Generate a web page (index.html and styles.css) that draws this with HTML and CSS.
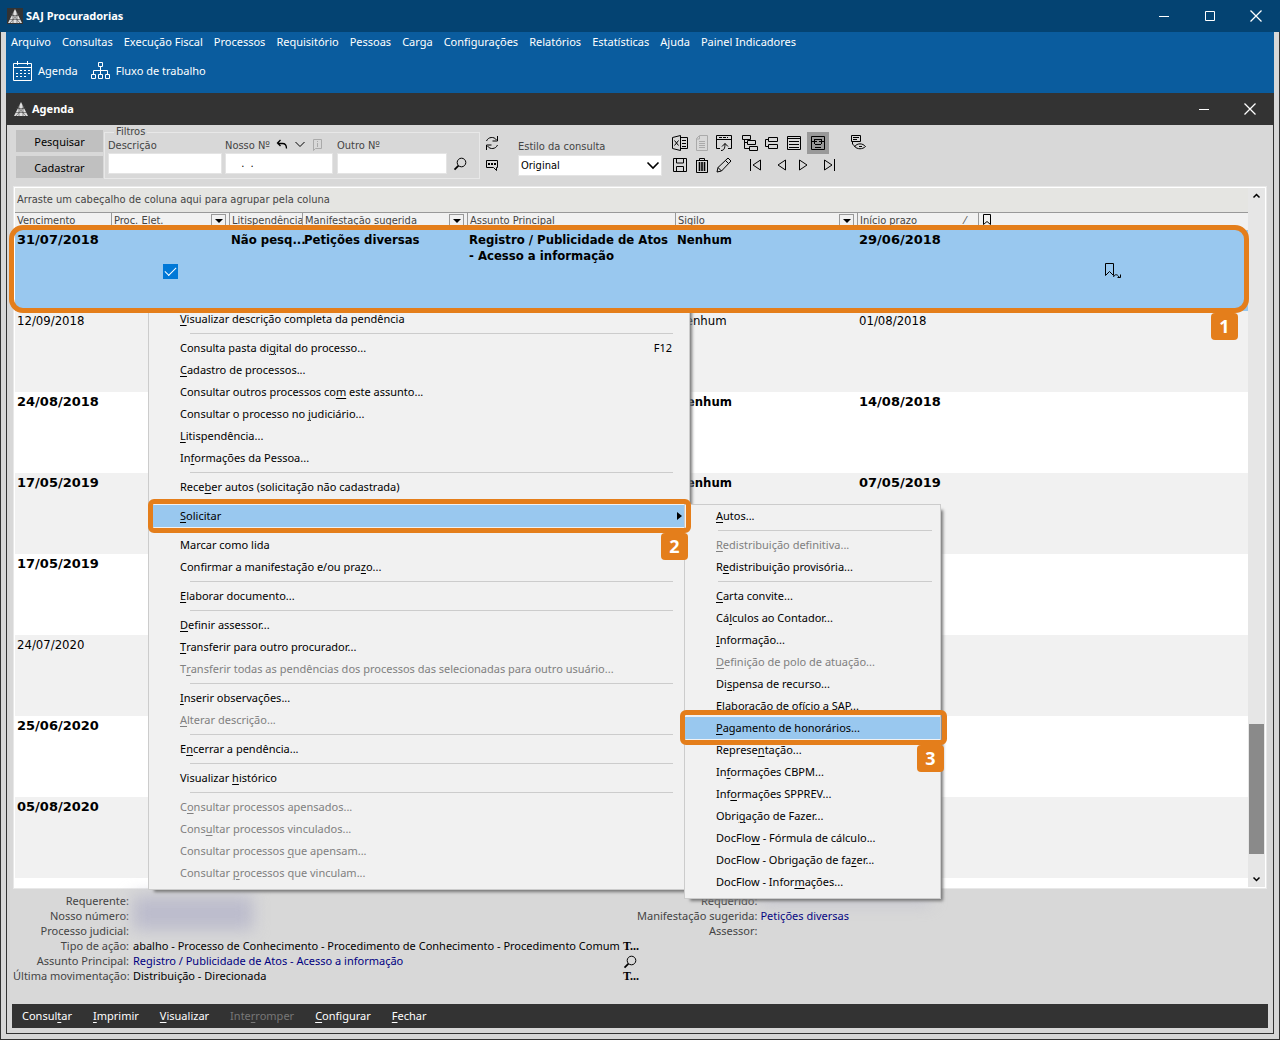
FILE: index.html
```html
<!DOCTYPE html>
<html lang="pt-BR">
<head>
<meta charset="utf-8">
<title>SAJ Procuradorias</title>
<link rel="stylesheet" href="styles.css">
</head>
<body>
<svg class="defs" aria-hidden="true">
  <symbol id="logo" viewBox="0 0 16 16"><path d="M8 1 15 15H1z" fill="#e0e0e0"/><path d="M6 4v12M10 4v12M3 7.500h10M2 11.500h12M4 5l9 10M12 5l-9 10" stroke="#444" stroke-width=".6" fill="none"/></symbol>
  <symbol id="close" viewBox="0 0 14 14"><path d="M1.500 1.500l11 11M12.500 1.500l-11 11" stroke-width="1.300"/></symbol>
  <symbol id="mark" viewBox="0 0 18 18"><path d="M1.500 1.500h8v12L5.500 9.500l-4 4zM9.500 15c1-3 4-3 5.500 0M16.500 12.500v3h-3"/></symbol>
  <symbol id="search" viewBox="0 0 14 14"><circle cx="8.500" cy="5.500" r="4.300"/><path d="M5.500 8.700 1.500 12.700" stroke-width="1.800"/></symbol>
</svg>
<div class="app">
  <header class="titlebar">
    <svg class="logo boxed"><use href="#logo"/></svg>
    <h1>SAJ Procuradorias</h1>
    <button class="win" aria-label="Minimizar"><svg width="14" height="14"><path d="M2 7.500h10"/></svg></button>
    <button class="win" aria-label="Maximizar"><svg width="14" height="14"><path d="M2.500 2.500h9v9h-9z"/></svg></button>
    <button class="win" aria-label="Fechar janela"><svg width="14" height="14"><use href="#close"/></svg></button>
  </header>
  <div class="frame">
    <div class="ribbon">
      <nav class="menubar">
        <a href="#">Arquivo</a><a href="#">Consultas</a><a href="#">Execução Fiscal</a><a href="#">Processos</a><a href="#">Requisitório</a><a href="#">Pessoas</a><a href="#">Carga</a><a href="#">Configurações</a><a href="#">Relatórios</a><a href="#">Estatísticas</a><a href="#">Ajuda</a><a href="#">Painel Indicadores</a>
      </nav>
      <div class="shortcuts">
        <button><svg width="20" height="20"><path d="M.5 2.500h18v17H.5zM.5 6.500h18M4.500 0v4M14.500 0v4"/><path d="M7 9.500h10M3 12.500h14M3 15.500h10" stroke-dasharray="2 2"/></svg>Agenda</button>
        <button><svg width="20" height="20"><path d="M7.500 1.500h4v4h-4zM.5 13.500h4v4h-4zM7.500 13.500h4v4h-4zM14.500 13.500h4v4h-4zM9.500 6v7M2.500 13V9.500h14V13"/></svg>Fluxo de trabalho</button>
      </div>
    </div>
    <main class="agenda">
      <header class="subtitle">
        <svg class="logo"><use href="#logo"/></svg>
        <h2>Agenda</h2>
        <button class="win" aria-label="Minimizar Agenda"><svg width="14" height="14"><path d="M2 7.500h10"/></svg></button>
        <button class="win" aria-label="Fechar Agenda"><svg width="14" height="14"><use href="#close"/></svg></button>
      </header>
      <div class="toolbar">
        <div class="actions"><button>Pesquisar</button><button>Cadastrar</button></div>
        <fieldset class="filters">
          <legend>Filtros</legend>
          <div class="field desc"><label for="desc">Descrição</label><input id="desc" type="text"></div>
          <div class="field nosso">
            <div class="labelrow"><label for="nosso">Nosso Nº</label>
              <svg width="12" height="12"><path d="M4.500 1 1.500 4l3 3M1.500 4.500h5c3 0 4 2 4 5" stroke-width="1.300"/></svg>
              <svg width="12" height="12"><path d="M1.500 3 6 7.500 10.500 3"/></svg>
              <svg class="off" width="12" height="12"><path d="M1.500.5h8v9h-6l-2 2zM5.500 4v4M5.500 2v1"/></svg>
            </div>
            <input id="nosso" type="text" value=" .  .">
          </div>
          <div class="field outro"><label for="outro">Outro Nº</label><input id="outro" type="text"></div>
          <button class="ico find" aria-label="Localizar"><svg width="14" height="14"><use href="#search"/></svg></button>
        </fieldset>
        <div class="pair">
          <button class="ico" aria-label="Atualizar"><svg width="16" height="16"><path d="M2.500 6C4 2 10 1 12.500 5M13.500 1v5h-5M13.500 10c-1.500 4-7.500 5-10 1M2.500 15v-5h5"/></svg></button>
          <button class="ico" aria-label="Comentários"><svg width="16" height="16"><path d="M2.500 3.500h11v7h-1v3l-3-3h-7z"/><path d="M4 7h8" stroke-width="2" stroke-dasharray="2 1"/></svg></button>
        </div>
        <div class="style"><label for="estilo">Estilo da consulta</label>
          <span class="selectbox"><select id="estilo"><option>Original</option></select><svg width="14" height="9"><path d="M1.500 1.500 7 7l5.500-5.500" stroke-width="1.600"/></svg></span></div>
        <div class="icons">
          <div class="iconrow">
            <button class="ico" aria-label="Exportar"><svg width="16" height="16"><path d="M8.500 2.500h7v11h-7M.5 2.500 8.500.5v15L.5 13.500zM2.500 5.500l4 5M6.500 5.500l-4 5M10 5.500h4M10 8.500h4M10 11.500h4"/></svg></button>
            <button class="ico off" aria-label="Documento"><svg width="16" height="16"><path d="M5.500.5h8v15h-11v-12zM5.500 1v3h-3M5 6.500h6M5 8.500h6M5 10.500h6M5 12.500h6"/></svg></button>
            <button class="ico" aria-label="Enviar"><svg width="16" height="16"><path d="M4 13.500H.5V.5h15v13H12M.5 4.500h15M5 15.500c3 0 4-2 4-7M6 11.500l3-3 3 3"/><path d="M3 2.500h9" stroke-dasharray="3 1"/></svg></button>
            <button class="ico gap" aria-label="Expandir"><svg width="16" height="16"><path d="M.5.500h8v4h-8zM5.500 5.500h8v4h-8zM7.500 11.500h8v4h-8zM2.500 5v8.500h5M3 7.500h2.500"/></svg></button>
            <button class="ico" aria-label="Recolher"><svg width="16" height="16"><path d="M4.500 2.500h9v4h-9zM4.500 9.500h9v4h-9zM4 4.500H1.500v7H4"/></svg></button>
            <button class="ico" aria-label="Linhas"><svg width="16" height="16"><path d="M1.500 1.500h13v13h-13zM2 3.500h12M3 6.500h10M3 9.500h10M3 12.500h10"/></svg></button>
            <button class="ico on" aria-label="Ajustar"><svg width="16" height="16"><path d="M1.500 1.500h13v13h-13zM2 6.500h5M9 6.500h5M4.500 4v5M11.500 4v5M5 4.500h6M5 9.500h6M5 12.500h6"/></svg></button>
            <button class="ico eye" aria-label="Exibir"><svg width="18" height="18"><path d="M2.500 1.500h9v6h-9zM4 3.500h6M4 5.500h4M3.500 8v2l3 3M5.500 12.500c3-3.500 8-3.500 11 0-3 3-8 3-11 0zM10 12.500h3"/></svg></button>
          </div>
          <div class="iconrow">
            <button class="ico" aria-label="Salvar"><svg width="16" height="16"><path d="M1.500 1.500h13v13h-13zM4.500 2v4h7V2M4.500 14V9.500h7V14"/></svg></button>
            <button class="ico" aria-label="Excluir"><svg width="16" height="16"><path d="M2.500 3.500h11v12h-11zM2 3.500h12M5.500 3V1.500h5V3"/><path d="M5.500 5v9M8 5v9M10.500 5v9" stroke-width="1.600"/></svg></button>
            <button class="ico" aria-label="Editar"><svg width="16" height="16"><path d="M1 15l1-4.500L12 1l3 3L5.500 14zM9.500 3.500l3 3M2 10.500l3.500 3.500"/></svg></button>
            <button class="ico first" aria-label="Primeiro"><svg width="14" height="14"><path d="M2.500 1v12M12.500 2v10L5 7z"/></svg></button>
            <button class="ico prev" aria-label="Anterior"><svg width="14" height="14"><path d="M11.500 2v10L4 7z"/></svg></button>
            <button class="ico" aria-label="Próximo"><svg width="14" height="14"><path d="M3.500 2v10L11 7z"/></svg></button>
            <button class="ico last" aria-label="Último"><svg width="14" height="14"><path d="M12.500 1v12M2.500 2v10L10 7z"/></svg></button>
          </div>
        </div>
      </div>

      <section class="gridwrap">
        <div class="grid">
          <div class="sheet">
            <p class="groupby">Arraste um cabeçalho de coluna aqui para agrupar pela coluna</p>
            <table>
              <colgroup><col class="c1"><col class="c2"><col class="c3"><col class="c4"><col class="c5"><col class="c6"><col class="c7"><col></colgroup>
              <thead><tr>
                <th>Vencimento</th><th>Proc. Elet.<i class="drop"></i></th><th>Litispendência</th><th>Manifestação sugerida<i class="drop"></i></th><th>Assunto Principal</th><th>Sigilo<i class="drop"></i></th><th>Início prazo<span class="sort">⁄</span></th><th><svg class="hmark" width="12" height="15"><path d="M2.500 1.500h7v10L6 8.500l-3.500 3z"/></svg></th>
              </tr></thead>
              <tbody>
                <tr class="current"><td class="date">31/07/2018</td><td class="mid"><input type="checkbox" checked aria-label="Processo eletrônico"></td><td>Não pesq...</td><td>Petições diversas</td><td class="wrap">Registro / Publicidade de Atos - Acesso a informação</td><td>Nenhum</td><td class="date">29/06/2018</td><td class="mid"><svg width="18" height="18"><use href="#mark"/></svg></td></tr>
                <tr class="read"><td>12/09/2018</td><td></td><td></td><td></td><td></td><td>Nenhum</td><td>01/08/2018</td><td></td></tr>
                <tr><td class="date">24/08/2018</td><td></td><td></td><td></td><td></td><td>Nenhum</td><td class="date">14/08/2018</td><td></td></tr>
                <tr><td class="date">17/05/2019</td><td></td><td></td><td></td><td></td><td>Nenhum</td><td class="date">07/05/2019</td><td></td></tr>
                <tr><td class="date">17/05/2019</td><td></td><td></td><td></td><td></td><td></td><td></td><td></td></tr>
                <tr class="read"><td>24/07/2020</td><td></td><td></td><td></td><td></td><td></td><td></td><td></td></tr>
                <tr><td class="date">25/06/2020</td><td></td><td></td><td></td><td></td><td></td><td></td><td></td></tr>
                <tr><td class="date">05/08/2020</td><td></td><td></td><td></td><td></td><td></td><td></td><td></td></tr>
              </tbody>
            </table>
          </div>
          <div class="scroll">
            <svg width="9" height="17"><path d="M1.500 9.500l3-3 3 3" stroke-width="1.500"/></svg>
            <span class="thumb"></span>
            <svg width="9" height="17"><path d="M1.500 7.500l3 3 3-3" stroke-width="1.500"/></svg>
          </div>
        </div>

        <div class="menu main-menu" role="menu">
          <button><u>V</u>isualizar descrição completa da pendência</button>
          <hr>
          <button>Consulta pasta di<u>g</u>ital do processo...<kbd>F12</kbd></button>
          <button><u>C</u>adastro de processos...</button>
          <button>Consultar outros processos co<u>m</u> este assunto...</button>
          <button>Consultar o processo no <u>j</u>udiciário...</button>
          <button><u>L</u>itispendência...</button>
          <button>In<u>f</u>ormações da Pessoa...</button>
          <hr>
          <button>Rece<u>b</u>er autos (solicitação não cadastrada)</button>
          <hr>
          <button class="sel"><u>S</u>olicitar<svg class="arrow" width="5" height="8"><path d="M0 0l5 4-5 4z"/></svg></button>
          <hr class="blank">
          <button>Marcar como lida</button>
          <button>Confirmar a manifestação e/ou pra<u>z</u>o...</button>
          <hr>
          <button><u>E</u>laborar documento...</button>
          <hr>
          <button><u>D</u>efinir assessor...</button>
          <button><u>T</u>ransferir para outro procurador...</button>
          <button disabled>T<u>r</u>ansferir todas as pendências dos processos das selecionadas para outro usuário...</button>
          <hr>
          <button><u>I</u>nserir observações...</button>
          <button disabled><u>A</u>lterar descrição...</button>
          <hr>
          <button>E<u>n</u>cerrar a pendência...</button>
          <hr>
          <button>Visualizar <u>h</u>istórico</button>
          <hr>
          <button disabled>C<u>o</u>nsultar processos apensados...</button>
          <button disabled>Cons<u>u</u>ltar processos vinculados...</button>
          <button disabled>Consultar processos <u>q</u>ue apensam...</button>
          <button disabled>Consultar <u>p</u>rocessos que vinculam...</button>
        </div>

        <div class="menu sub-menu" role="menu">
          <button><u>A</u>utos...</button>
          <hr>
          <button disabled><u>R</u>edistribuição definitiva...</button>
          <button>R<u>e</u>distribuição provisória...</button>
          <hr>
          <button><u>C</u>arta convite...</button>
          <button>Cá<u>l</u>culos ao Contador...</button>
          <button><u>I</u>nformação...</button>
          <button disabled><u>D</u>efinição de polo de atuação...</button>
          <button>Di<u>s</u>pensa de recurso...</button>
          <button>Elaboração de ofício a SAP...</button>
          <button class="sel"><u>P</u>agamento de honorários...</button>
          <button>Represe<u>n</u>tação...</button>
          <button>In<u>f</u>ormações CBPM...</button>
          <button>Inf<u>o</u>rmações SPPREV...</button>
          <button>Obri<u>g</u>ação de Fazer...</button>
          <button>DocFlo<u>w</u> - Fórmula de cálculo...</button>
          <button>DocFlow - Obrigação de fa<u>z</u>er...</button>
          <button>DocFlow - Infor<u>m</u>ações...</button>
        </div>

        <div class="ring ring1"><b>1</b></div>
        <div class="ring ring2"><b>2</b></div>
        <div class="ring ring3"><b>3</b></div>
      </section>

      <section class="details">
        <dl class="left">
          <dt>Requerente:</dt><dd><span class="smudge a"></span></dd>
          <dt>Nosso número:</dt><dd></dd>
          <dt>Processo judicial:</dt><dd></dd>
          <dt>Tipo de ação:</dt><dd class="black">abalho - Processo de Conhecimento - Procedimento de Conhecimento - Procedimento Comum</dd>
          <dt>Assunto Principal:</dt><dd>Registro / Publicidade de Atos - Acesso a informação</dd>
          <dt>Última movimentação:</dt><dd class="black">Distribuição - Direcionada</dd>
        </dl>
        <div class="tools">
          <button aria-label="Texto da ação">T...</button>
          <button aria-label="Ver assunto"><svg width="14" height="14"><use href="#search"/></svg></button>
          <button aria-label="Texto da movimentação">T...</button>
        </div>
        <dl class="right">
          <dt>Requerido:</dt><dd><span class="smudge b"></span></dd>
          <dt>Manifestação sugerida:</dt><dd>Petições diversas</dd>
          <dt>Assessor:</dt><dd></dd>
        </dl>
      </section>
      <footer class="bottombar">
        <button>Consul<u>t</u>ar</button><button><u>I</u>mprimir</button><button><u>V</u>isualizar</button><button disabled>Inte<u>r</u>romper</button><button><u>C</u>onfigurar</button><button><u>F</u>echar</button>
      </footer>
    </main>
  </div>
</div>
</body>
</html>
```

FILE: styles.css
```css
* { box-sizing: border-box; }
body { margin: 0; font: 11px/16px "Noto Sans", "Open Sans", sans-serif; color: #000; background: #d8d8d8; }
button, input, select { font: inherit; color: inherit; margin: 0; padding: 0; border: 0; background: none; }
h1, h2, p, dl, dd { margin: 0; }
svg { display: block; fill: none; stroke: currentColor; flex: none; }
.defs { position: absolute; width: 0; height: 0; }
u { text-underline-offset: 2px; }

.app { min-height: 100vh; display: flex; flex-direction: column; }
.titlebar, .subtitle { display: flex; align-items: center; height: 32px; color: #fff; }
.titlebar { background: #044372; padding: 0 1px 0 7px; }
.titlebar h1, .subtitle h2 { flex: 1; font-size: 11px; font-weight: bold; }
.logo { width: 16px; height: 16px; margin-right: 3px; stroke: none; }
.boxed { background: #333; }
.win { width: 46px; height: 32px; display: grid; place-items: center; }

.frame { flex: 1; display: flex; flex-direction: column; border: 1px solid #333; border-top: 0; padding: 0 5px 5px; }
.ribbon { background: #0a5c9e; color: #fff; height: 61px; }
.menubar { display: flex; gap: 11px; padding: 2px 5px; }
.menubar a { color: inherit; text-decoration: none; white-space: nowrap; }
.shortcuts { display: flex; gap: 13px; padding: 9px 7px; }
.shortcuts button { display: flex; align-items: center; gap: 5px; }

.agenda { flex: 1; display: flex; flex-direction: column; border: 1px solid #333; border-top: 0; color: #444; }
.subtitle { background: #333; padding: 0 1px 0 7px; margin: 0 -1px; }

.toolbar { display: flex; height: 61px; padding-left: 9px; }
.actions { display: flex; flex-direction: column; gap: 4px; padding-top: 5px; width: 87px; color: #000; }
.actions button { height: 22px; background: #c0c0c0; padding-top: 2px; }
.filters, .style, .groupby, th { font-family: "DejaVu Sans Condensed", "DejaVu Sans", sans-serif; }
.filters { display: flex; gap: 3px; width: 376px; height: 54px; margin: 0 0 0 1px; padding: 0 0 0 3px; border: 1px solid #e8e8e8; }
.filters legend { margin-left: 6px; padding: 0 2px; line-height: 14px; }
.field { display: flex; flex-direction: column; }
.field label { line-height: 14px; white-space: nowrap; }
.field input { height: 21px; width: 100%; background: #fff; border: 1px solid #e4e4e4; color: #000; padding: 0 12px; }
.desc { width: 114px; }
.nosso { width: 108px; }
.outro { width: 110px; margin-left: 1px; }
.labelrow { display: flex; gap: 6px; color: #000; }
.labelrow label { color: #444; }
.off, .labelrow .off { color: #aaa; }
.ico { display: grid; place-items: center; width: 22px; height: 22px; color: #000; }
.ico.off { color: #aaa; }
.find { width: 20px; margin-top: 14px; }
.pair { padding: 7px 0 0 1px; }
.style { width: 144px; margin-left: 15px; padding-top: 14px; }
.style label { line-height: 16px; }
.selectbox { display: grid; align-items: center; }
.selectbox > * { grid-area: 1 / 1; }
.selectbox select { appearance: none; width: 100%; height: 21px; background: #fff; border: 1px solid #e4e4e4; padding-left: 2px; color: #000; }
.selectbox svg { justify-self: end; margin-right: 2px; color: #000; }
.icons { margin-left: 7px; padding-top: 7px; }
.iconrow { display: flex; }
.gap { margin-left: 4px; }
.on { background: #999; margin-left: 2px; }
.eye { margin-left: 18px; }
.first { margin-left: 9px; }
.prev { margin-left: 4px; }
.last { margin-left: 4px; }

.gridwrap { position: relative; flex: 1; margin: 0 6px; }
.grid { display: flex; height: 703px; border: 1px solid #e8e8e8; outline: 1px solid #fff; outline-offset: -2px; padding: 1px; overflow: hidden; background: #fff; }
.sheet { flex: 1; min-width: 0; overflow: hidden; }
.groupby { height: 24px; line-height: 24px; padding-left: 2px; background: #e5e5e2; }
table { width: 100%; border-collapse: separate; border-spacing: 0; table-layout: fixed; color: #000; }
.c1 { width: 96px; } .c2 { width: 118px; } .c3 { width: 73px; } .c4 { width: 165px; } .c5 { width: 208px; } .c6 { width: 182px; } .c7 { width: 121px; }
th { position: relative; height: 18px; padding: 0 0 2px 2px; font-weight: normal; text-align: left; line-height: 15px; color: #444; background: #f1f1f1; border-top: 1px solid #999; white-space: nowrap; }
th + th { border-left: 1px solid #999; }
.drop { position: absolute; right: 3px; top: 1px; width: 15px; height: 15px; border: 1px solid #999; }
.drop::after { content: ""; position: absolute; left: 3px; top: 4px; border: 4px solid transparent; border-top-color: #000; border-bottom: 0; }
.sort { position: absolute; right: 12px; }
.hmark { color: #000; }
td { height: 81px; padding: 2px 0 0 2px; vertical-align: top; font: bold 13px/16px "DejaVu Sans Condensed", sans-serif; white-space: nowrap; }
td.date { font-family: "DejaVu Sans", sans-serif; }
td.wrap { white-space: normal; }
.read td { font-weight: normal; }
tbody tr:nth-child(even) { background: #f1f1f1; }
tbody .current { background: #99c8ef; position: relative; z-index: 3; }
td.mid { vertical-align: middle; text-align: center; padding: 0; }
td.mid svg { margin: 0 auto; }
input[type=checkbox] { appearance: none; width: 15px; height: 15px; vertical-align: middle; background: #0078d7; display: inline-grid; place-items: center; }
input[type=checkbox]::after { content: ""; width: 10px; height: 5px; border: solid #fff; border-width: 0 0 1px 1px; transform: translateY(-1px) rotate(-45deg); }
.scroll { width: 17px; background: #e6e6e6; color: #000; display: flex; flex-direction: column; align-items: center; }
.thumb { width: 15px; height: 130px; margin: auto 0 16px; background: #8a8a8a; }

.menu { position: absolute; display: flex; flex-direction: column; background: #f1f1f1; border: 1px solid #ccc; box-shadow: 4px 4px 3px -2px #777; padding: 3px 4px 5px; color: #000; }
.main-menu { left: 135px; top: 118px; width: 542px; z-index: 2; }
.sub-menu { left: 671px; top: 318px; width: 257px; padding: 0 0 5px; z-index: 4; }
.menu button { display: flex; align-items: center; height: 22px; text-align: left; white-space: pre; padding: 0 13px 0 27px; }
.sub-menu button { padding-left: 31px; }
.menu button:disabled { color: #808080; }
.menu hr { width: auto; height: 7px; margin: 0 12px 0 37px; border: 0; background: linear-gradient(#ccc, #ccc) 0 3px / 100% 1px no-repeat; }
.sub-menu hr { margin: 0 8px 0 33px; }
.menu .blank { background: none; }
.menu kbd { margin-left: auto; font: inherit; }
.menu .sel { background: #99c8ef; }
.arrow { margin-left: auto; margin-right: -10px; fill: #000; stroke: none; }

.ring { position: absolute; z-index: 5; border: 5px solid #e47e1b; border-radius: 6px; }
.ring b { position: absolute; top: 100%; right: -2px; width: 27px; height: 27px; margin-top: 5px; border-radius: 4px; background: #e47e1b; color: #fff; font: bold 18px/27px "Open Sans", sans-serif; text-align: center; }
.ring1 { left: -4px; right: 18px; top: 39px; height: 88px; border-radius: 14px; }
.ring1 b { right: 6px; }
.ring2 { left: 135px; top: 313px; width: 543px; height: 34px; }
.ring3 { left: 667px; top: 524px; width: 267px; height: 35px; }

.details { display: flex; height: 115px; padding: 4px 6px 0; }
dl { display: grid; grid-auto-rows: 15px; line-height: 15px; column-gap: 4px; align-content: start; white-space: nowrap; }
dt { text-align: right; }
dd { color: #000080; }
dd.black { color: #000; }
.left { grid-template-columns: 116px 478px; }
.right { grid-template-columns: auto auto; column-gap: 3px; }
.tools { display: flex; flex-direction: column; width: 14px; margin-left: 12px; padding-top: 46px; color: #000; }
.tools button { height: 15px; font: bold 12px/15px "Liberation Serif", serif; }
.smudge { display: block; filter: blur(8px); background: #bcbccc; }
.a { width: 120px; height: 34px; margin-top: 3px; }
.b { width: 170px; height: 8px; margin-top: 2px; }

.bottombar { display: flex; gap: 21px; height: 24px; margin: 0 5px 5px; padding-left: 10px; background: #333; color: #fff; }
.bottombar button:disabled { color: #777; }
```
